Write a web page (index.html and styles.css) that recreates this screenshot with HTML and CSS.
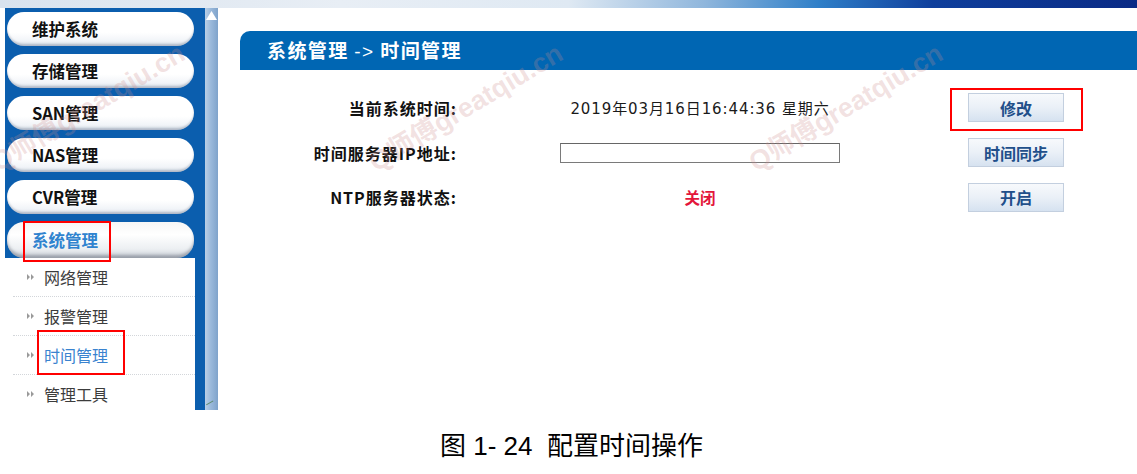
FILE: index.html
```html
<!DOCTYPE html>
<html lang="zh-CN">
<head>
<meta charset="utf-8">
<title>配置时间操作</title>
<link rel="stylesheet" href="styles.css">
</head>
<body>
<div class="page">
  <div class="topstrip"></div>
  <div class="frame">
    <aside class="sidebar">
      <div class="navcol">
        <div class="pill">维护系统</div>
        <div class="pill">存储管理</div>
        <div class="pill">SAN管理</div>
        <div class="pill">NAS管理</div>
        <div class="pill">CVR管理</div>
        <div class="pill active"><span class="mark mark-sys"></span>系统管理</div>
        <ul class="submenu">
          <li><svg class="arr" viewBox="0 0 10 8"><path d="M1 1 L4 4 L1 7Z M5 1 L8 4 L5 7Z"/></svg>网络管理</li>
          <li><svg class="arr" viewBox="0 0 10 8"><path d="M1 1 L4 4 L1 7Z M5 1 L8 4 L5 7Z"/></svg>报警管理</li>
          <li class="cur"><svg class="arr" viewBox="0 0 10 8"><path d="M1 1 L4 4 L1 7Z M5 1 L8 4 L5 7Z"/></svg>时间管理<span class="mark mark-time"></span></li>
          <li><svg class="arr" viewBox="0 0 10 8"><path d="M1 1 L4 4 L1 7Z M5 1 L8 4 L5 7Z"/></svg>管理工具</li>
        </ul>
      </div>
      <div class="scrollbar">
        <svg class="up" viewBox="0 0 14 12"><path d="M7 1 L13 11 L1 11Z"/></svg>
        <span class="grip"></span>
      </div>
    </aside>
    <main class="main">
      <div class="titlebar">系统管理 <span class="arrow">-&gt;</span> 时间管理</div>
      <div class="form">
        <div class="lbl">当前系统时间:</div>
        <div class="val date">2019年03月16日16:44:36 星期六</div>
        <div class="btncell"><button class="btn">修改</button><span class="mark mark-btn"></span></div>

        <div class="lbl">时间服务器IP地址:</div>
        <div class="val"><input class="ipbox" type="text"></div>
        <div class="btncell"><button class="btn">时间同步</button></div>

        <div class="lbl">NTP服务器状态:</div>
        <div class="val"><span class="off">关闭</span></div>
        <div class="btncell"><button class="btn">开启</button></div>
      </div>
    </main>
  </div>
  <div class="caption">图 1- 24&nbsp; 配置时间操作</div>

  <div class="wm wm1">Q师傅greatqiu.cn</div>
  <div class="wm wm2">Q师傅greatqiu.cn</div>
  <div class="wm wm3">Q师傅greatqiu.cn</div>
</div>
</body>
</html>
```

FILE: styles.css
```css
html, body {
  margin: 0;
  padding: 0;
  background: #ffffff;
}
body {
  font-family: "Noto Sans CJK SC", "Liberation Sans", sans-serif;
  color: #000;
}
.page {
  position: relative;
  width: 1137px;
  height: 474px;
  overflow: hidden;
}
.topstrip {
  height: 8px;
  background: linear-gradient(to right, #d9e3ee 0%, #e8eef5 30%, #dfe9f3 50%, #8fb6dc 62%, #2f7fc8 72%, #0f3f9c 82%, #0a2a85 100%);
}
.frame {
  display: flex;
  height: 402px;
}
.sidebar {
  display: flex;
  width: 218px;
  padding-left: 5px;
  box-sizing: border-box;
  flex: none;
}
.navcol {
  width: 200px;
  background: #0b5eae;
  padding-top: 4px;
  box-sizing: border-box;
  display: flex;
  flex-direction: column;
}
.pill {
  position: relative;
  margin-left: 2px;
  width: 187px;
  height: 34px;
  margin-bottom: 8px;
  box-sizing: border-box;
  border-radius: 17px;
  background: linear-gradient(to bottom, #ffffff 0%, #ffffff 60%, #f1f4f8 85%, #d6dce4 100%);
  box-shadow: inset 0 -2px 2px rgba(60, 80, 110, 0.25);
  padding-left: 25px;
  font-size: 16.5px;
  font-weight: 700;
  line-height: 34px;
  color: #111;
}
.pill.active {
  height: 36px;
  margin-bottom: 0;
  background: linear-gradient(to bottom, #f6f6f6 0%, #ffffff 35%, #eceff2 75%, #c9ced4 100%);
  box-shadow: inset 0 -3px 3px rgba(60, 70, 90, 0.35);
  color: #2f83cf;
  line-height: 36px;
}
.submenu {
  list-style: none;
  margin: 0 10px 0 0;
  padding: 0;
  background: #ffffff;
  flex: 1;
}
.submenu li {
  position: relative;
  height: 38px;
  line-height: 38px;
  margin-left: 8px;
  padding-left: 31px;
  font-size: 16px;
  color: #3c3c3c;
  border-bottom: 1px dotted #d3d6da;
}
.submenu li:last-child {
  border-bottom: none;
}
.submenu li.cur {
  color: #3a83cf;
}
.arr {
  position: absolute;
  left: 13px;
  top: 15px;
  width: 10px;
  height: 8px;
  fill: #9a9a9a;
}
.scrollbar {
  position: relative;
  width: 13px;
  background: linear-gradient(to right, #b9cfe6 0%, #9dbbdc 40%, #7fa3cb 100%);
}
.up {
  position: absolute;
  left: 0;
  top: 2px;
  width: 13px;
  height: 11px;
  fill: #ffffff;
}
.grip {
  position: absolute;
  left: 2px;
  bottom: 2px;
  width: 8px;
  height: 5px;
  border-top: 1px solid #5b8a6a;
  transform: rotate(-30deg);
}
.main {
  flex: 1;
  padding-left: 22px;
  padding-top: 23px;
}
.titlebar {
  height: 39px;
  background: #0066b3;
  border-radius: 10px 0 0 0;
  color: #ffffff;
  font-size: 19px;
  font-weight: 700;
  letter-spacing: 1.4px;
  line-height: 37px;
  padding-left: 27px;
  white-space: pre;
}
.arrow {
  font-weight: 400;
  font-family: "Liberation Sans", sans-serif;
}
.form {
  display: grid;
  grid-template-columns: 217px 103px 280px 128px 96px;
  grid-auto-rows: 44.75px;
  margin-top: 15.5px;
  align-items: center;
}
.lbl {
  grid-column: 1;
  text-align: right;
  font-size: 16px;
  letter-spacing: 1px;
  font-weight: 700;
  color: #111;
  white-space: nowrap;
}
.val {
  grid-column: 3;
  text-align: center;
  font-size: 14.5px;
  color: #222;
  display: flex;
  justify-content: center;
  align-items: center;
  white-space: nowrap;
}
.val.date {
  font-family: "DejaVu Sans", "Noto Sans CJK SC", sans-serif;
  font-size: 15px;
  letter-spacing: 0.9px;
  color: #1a1a1a;
}
.ipbox {
  width: 280px;
  height: 20px;
  box-sizing: border-box;
  border: 1px solid #7a7a7a;
  border-top-color: #666;
  padding: 0;
  margin: 0;
  background: #fff;
}
.off {
  color: #e3163b;
  font-weight: 700;
  font-size: 15.5px;
}
.btncell {
  grid-column: 5;
  position: relative;
  height: 30px;
  display: flex;
  align-items: center;
}
.btn {
  width: 96px;
  height: 29px;
  border: 1px solid #c3cfdf;
  background: linear-gradient(to bottom, #f7f9fc 0%, #eaf0f7 50%, #d6e2f0 100%);
  color: #214f8a;
  font-family: "Noto Sans CJK SC", sans-serif;
  font-size: 16px;
  font-weight: 700;
  padding: 0;
  margin: 0;
  white-space: nowrap;
}
.mark {
  position: absolute;
  border: 2px solid #ff0000;
  box-sizing: border-box;
  pointer-events: none;
}
.mark-sys {
  left: 16px;
  top: -1px;
  width: 88px;
  height: 41px;
}
.mark-time {
  left: 24px;
  top: -6px;
  width: 88px;
  height: 45px;
}
.mark-btn {
  left: -18px;
  top: -5px;
  width: 133px;
  height: 43px;
}
.caption {
  margin-top: 21px;
  text-align: center;
  font-family: "Liberation Sans", "Noto Sans CJK SC", sans-serif;
  font-size: 26px;
  line-height: 30px;
  color: #000;
  padding-left: 6px;
}
.wm {
  position: absolute;
  font-family: "Liberation Sans", "Noto Sans CJK SC", sans-serif;
  font-size: 27px;
  font-weight: 700;
  color: rgba(205, 140, 140, 0.26);
  white-space: nowrap;
  transform-origin: left bottom;
  transform: rotate(-31deg);
  pointer-events: none;
}
.wm1 { left: 2px; top: 140px; }
.wm2 { left: 380px; top: 140px; }
.wm3 { left: 760px; top: 140px; }
```
